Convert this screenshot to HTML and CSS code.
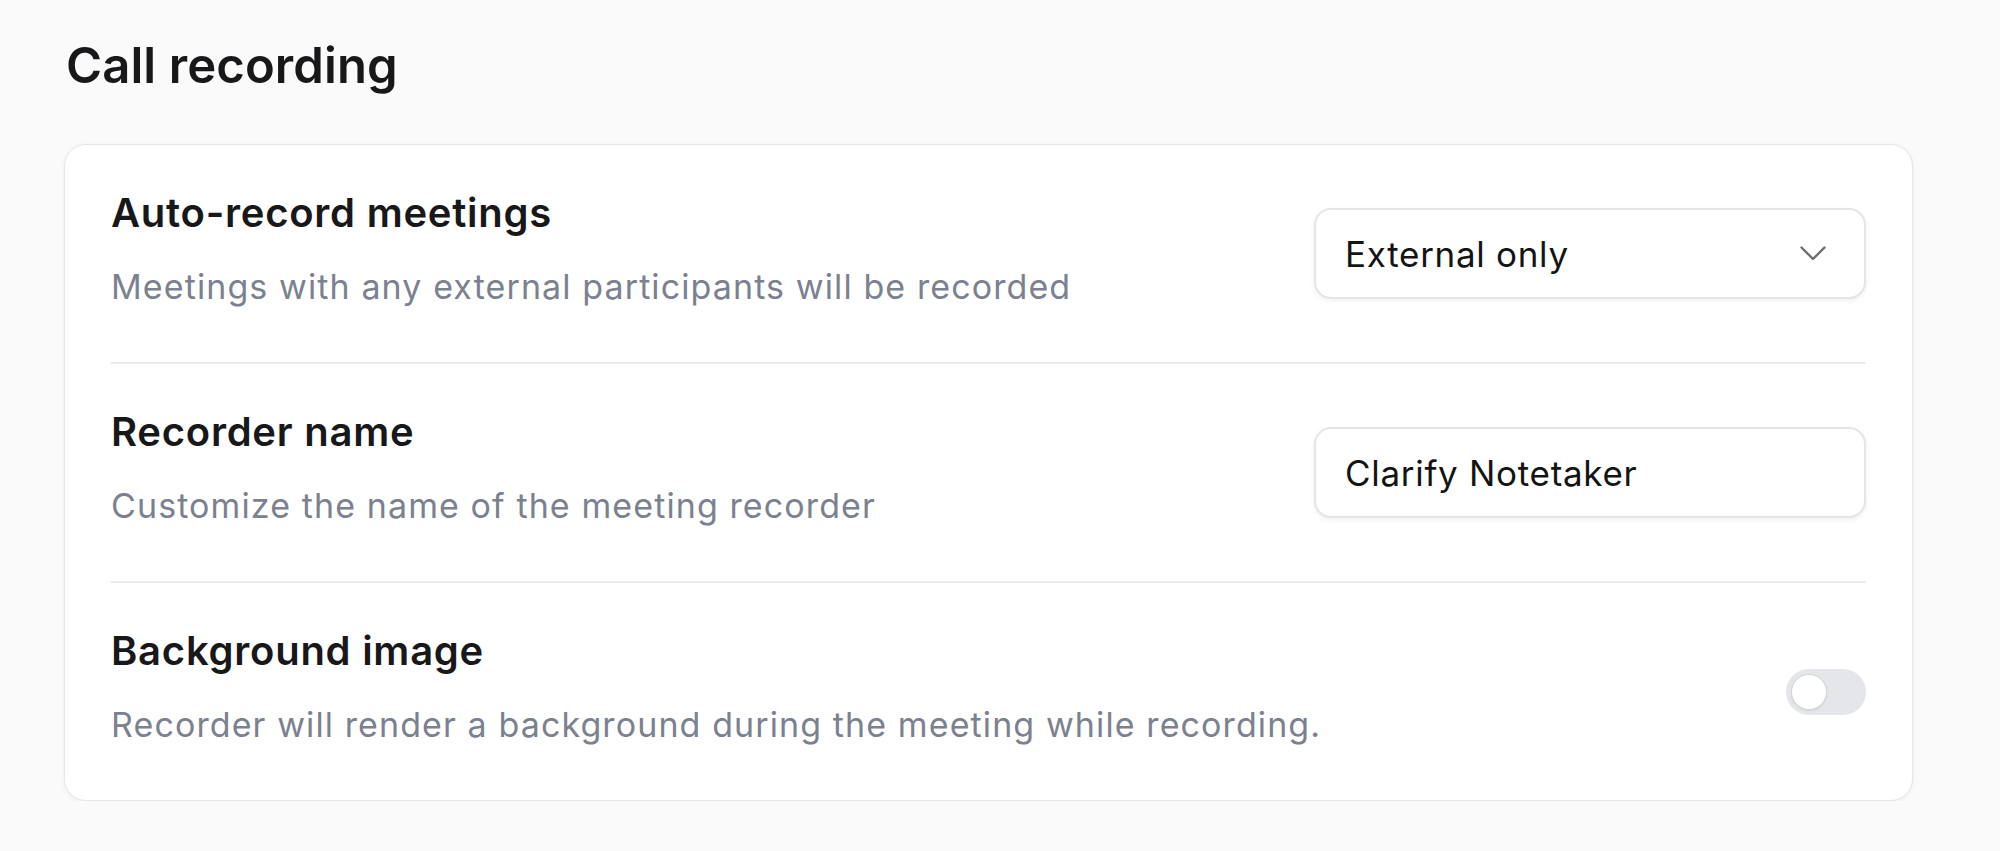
FILE: index.html
```html
<!DOCTYPE html>
<html lang="en">
<head>
<meta charset="utf-8">
<title>Call recording</title>
<link rel="stylesheet" href="styles.css">
</head>
<body>
<main class="page">
  <h1 class="page-title">Call recording</h1>
  <section class="card">
    <div class="row">
      <div class="row-text">
        <div class="row-title">Auto-record meetings</div>
        <div class="row-desc">Meetings with any external participants will be recorded</div>
      </div>
      <div class="field select">
        <span class="field-value">External only</span>
        <svg class="chevron" viewBox="0 0 26 15" width="26" height="15" aria-hidden="true">
          <path d="M1.5 1.5 L13 13 L24.5 1.5" fill="none" stroke="#6e6e73" stroke-width="2.4" stroke-linecap="round" stroke-linejoin="round"/>
        </svg>
      </div>
    </div>
    <div class="row">
      <div class="row-text">
        <div class="row-title">Recorder name</div>
        <div class="row-desc">Customize the name of the meeting recorder</div>
      </div>
      <div class="field">
        <span class="field-value">Clarify Notetaker</span>
      </div>
    </div>
    <div class="row">
      <div class="row-text">
        <div class="row-title">Background image</div>
        <div class="row-desc">Recorder will render a background during the meeting while recording.</div>
      </div>
      <div class="toggle"><span class="knob"></span></div>
    </div>
  </section>
</main>
</body>
</html>
```

FILE: styles.css
```css
* { box-sizing: border-box; }
html, body {
  margin: 0;
  background: #fafafa;
  font-family: Inter, "Noto Sans", "Liberation Sans", sans-serif;
  color: #18181b;
}
.page {
  padding: 38px 87px 0 64px;
}
.page-title {
  margin: 0 0 50px 2px;
  font-size: 49px;
  line-height: 56px;
  font-weight: 600;
  letter-spacing: 0.1px;
}
.card {
  background: #ffffff;
  border: 1.5px solid #e6e6e6;
  border-radius: 22px;
  box-shadow: 0 1px 4px rgba(0, 0, 0, 0.06);
  padding: 0 46px;
}
.row {
  display: flex;
  align-items: center;
  justify-content: space-between;
  height: 219px;
  border-bottom: 2px solid #ebebeb;
}
.row:last-child { border-bottom: none; height: 217px; }
.row-text {
  display: flex;
  flex-direction: column;
  gap: 28px;
  margin-top: -9px;
}
.row-title {
  font-size: 40px;
  line-height: 48px;
  font-weight: 600;
  letter-spacing: 0.75px;
  color: #18181b;
}
.row-desc {
  font-size: 34px;
  line-height: 44px;
  font-weight: 400;
  color: #7b8190;
  letter-spacing: 1.1px;
}
.field {
  width: 552px;
  height: 91px;
  border: 2px solid #e5e5e5;
  border-radius: 17px;
  background: #ffffff;
  box-shadow: 0 2px 5px rgba(0, 0, 0, 0.06);
  display: flex;
  align-items: center;
  justify-content: space-between;
  padding: 0 38px 0 29px;
}
.field-value {
  font-size: 35px;
  color: #141414;
  letter-spacing: 0.7px;
}
.chevron { display: block; }
.toggle {
  width: 80px;
  height: 46px;
  border-radius: 23px;
  background: #e4e6ea;
  display: flex;
  align-items: center;
  padding: 0 5px;
}
.knob {
  width: 36px;
  height: 36px;
  border-radius: 50%;
  background: #ffffff;
  border: 1.5px solid #d2d4d8;
  box-shadow: 0 1px 2px rgba(0, 0, 0, 0.08);
}
```
